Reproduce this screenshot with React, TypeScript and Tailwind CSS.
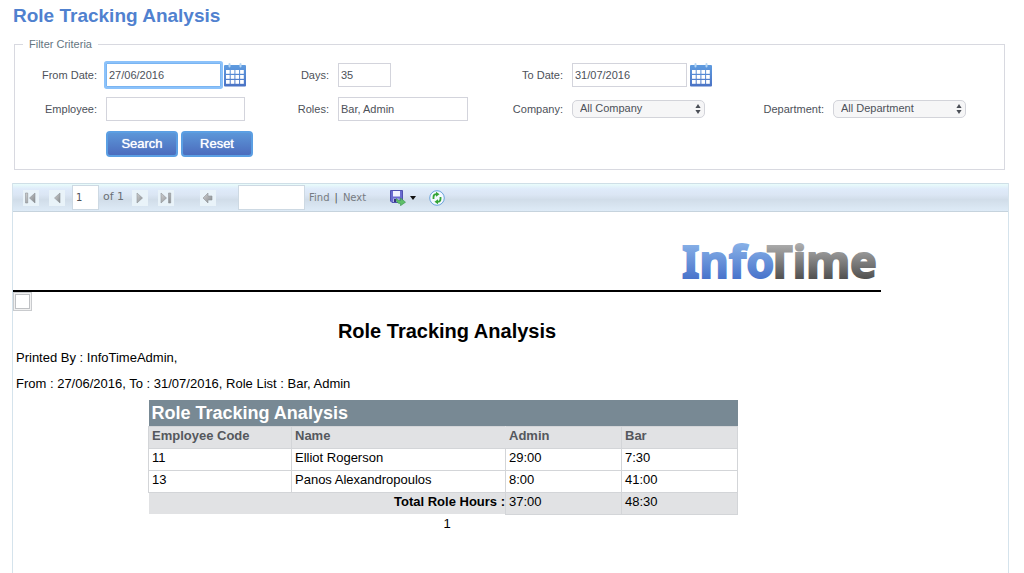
import type { ReactNode } from "react";

const rows = [
  { code: "11", name: "Elliot Rogerson", admin: "29:00", bar: "7:30" },
  { code: "13", name: "Panos Alexandropoulos", admin: "8:00", bar: "41:00" },
];

const inputClass = "h-6 border border-[#d3d4dc] bg-white text-[#4d5159] outline-none";

function CalendarIcon() {
  return (
    <svg width="22" height="24" viewBox="0 0 22 24" aria-hidden="true">
      <defs>
        <linearGradient id="cal" x1="0" y1="0" x2="0" y2="1">
          <stop offset="0" stopColor="#5f9ce0" />
          <stop offset="1" stopColor="#4a72c4" />
        </linearGradient>
      </defs>
      <rect x="0" y="2" width="22" height="21.5" rx="1" fill="url(#cal)" />
      <rect x="4.5" y="0" width="2" height="4.5" rx="1" fill="#b5d5f3" />
      <rect x="15.5" y="0" width="2" height="4.5" rx="1" fill="#b5d5f3" />
      {[7, 12, 17].map((y) =>
        [2, 6.7, 11.4, 16.1].map((x) => (
          <rect key={`${x}-${y}`} x={x} y={y} width="3.7" height="3.8" fill="#fff" />
        ))
      )}
    </svg>
  );
}

function Label({ htmlFor, children }: { htmlFor: string; children: ReactNode }) {
  return (
    <label htmlFor={htmlFor} className="text-right whitespace-nowrap">
      {children}
    </label>
  );
}

function DateField({ id, value, focused }: { id: string; value: string; focused?: boolean }) {
  return (
    <div className="flex items-center gap-[3px]">
      <input
        id={id}
        defaultValue={value}
        className={
          focused
            ? "h-6 w-[115px] border border-[#7ab5f2] bg-white px-[2px] text-[#4d5159] ring-2 ring-[#8cc2fa] rounded-[1px] outline-none"
            : `${inputClass} w-[115px] px-[2px]`
        }
      />
      <button type="button" aria-label="Open calendar" className="shrink-0">
        <CalendarIcon />
      </button>
    </div>
  );
}

function SelectField({ id, option }: { id: string; option: string }) {
  return (
    <div className="relative w-[133px]">
      <select
        id={id}
        className="block h-[18px] w-full appearance-none rounded-[5px] border border-[#d3d4da] bg-[#f6f6f7] pb-[2px] pl-[7px] leading-[14px] text-[#4d5159] outline-none"
      >
        <option>{option}</option>
      </select>
      <svg
        className="pointer-events-none absolute top-1 right-1"
        width="6"
        height="10"
        viewBox="0 0 6 10"
        fill="#4a4e56"
        aria-hidden="true"
      >
        <path d="M3 0 5.6 4H.4zM3 10 .4 6h5.2z" />
      </svg>
    </div>
  );
}

function ToolButton({ label, children }: { label: string; children: ReactNode }) {
  return (
    <button type="button" aria-label={label} className="size-4 shrink-0 bg-[#e9f3f9]">
      <svg width="16" height="16" viewBox="0 0 16 16" fill="url(#metal)" stroke="#8f9499" strokeWidth="0.6">
        {children}
      </svg>
    </button>
  );
}

function Toolbar() {
  return (
    <div className="flex h-[29px] items-center border-y border-t-[#cfdfe7] border-b-[#c6d3dd] bg-[linear-gradient(#e9fcfb,#dfebfa_18%,#dbe6f4_40%,#d1dde9_58%,#deebf7)] pl-[10px] font-['DejaVu_Sans',sans-serif] text-[10px] text-[#767b82]">
      <svg width="0" height="0" className="absolute" aria-hidden="true">
        <defs>
          <linearGradient id="metal" x1="0" y1="0" x2="1" y2="1">
            <stop offset="0" stopColor="#d2d2d2" />
            <stop offset="1" stopColor="#85898d" />
          </linearGradient>
        </defs>
      </svg>
      <div className="flex items-center gap-[10px]">
        <ToolButton label="First page">
          <path d="M2.5 3h2.2v10H2.5zM12 3v10L6.5 8z" />
        </ToolButton>
        <ToolButton label="Previous page">
          <path d="M11 3v10L5.5 8z" />
        </ToolButton>
      </div>
      <input
        aria-label="Current page"
        defaultValue="1"
        className="ml-[7px] h-[25px] w-[27px] border border-[#cdd9e3] bg-white pl-[3px] text-[#4d5159] outline-none"
      />
      <span className="ml-1 w-[29px] text-[11px] text-[#6a6f76]">of 1</span>
      <div className="flex items-center gap-[10px]">
        <ToolButton label="Next page">
          <path d="M5 3v10l5.5-5z" />
        </ToolButton>
        <ToolButton label="Last page">
          <path d="M3 3v10l5.5-5zM10.5 3h2.2v10h-2.2z" />
        </ToolButton>
      </div>
      <div className="ml-[26px] flex">
        <ToolButton label="Back to parent report">
          <path d="M8 3v3h4v4H8v3L3 8z" />
        </ToolButton>
      </div>
      <input
        aria-label="Find text"
        className="ml-[22px] h-[25px] w-[67px] border border-[#cdd9e3] bg-white px-1 outline-none"
      />
      <a href="#find" className="ml-1">Find</a>
      <span className="mx-[5px] text-[#555]">|</span>
      <a href="#next">Next</a>
      <button type="button" aria-label="Export" className="ml-6 flex items-center gap-1">
        <svg width="16" height="16" viewBox="0 0 16 16" aria-hidden="true">
          <path d="M.5.5h12v12H2L.5 11z" fill="#6a6cd0" stroke="#4f51b0" />
          <path d="M3 1h7v5.5H3z" fill="#f1f3ff" />
          <path d="M3 8.5h6.5V12H3z" fill="#b6b9e8" />
          <path d="M4 9h2v3H4z" fill="#34367e" />
          <path
            d="M6.5 8.5c1 1.600 2.200 2 4 2V8l5 4.200-5 3.500v-2.200c-3 0-4.500-1.600-4-5z"
            fill="#5fbf69"
            stroke="#35924a"
            strokeWidth="0.6"
          />
        </svg>
        <svg width="6" height="4" viewBox="0 0 6 4" aria-hidden="true">
          <path d="M0 0h6L3 4z" fill="#111" />
        </svg>
      </button>
      <button type="button" aria-label="Refresh" className="ml-[13px]">
        <svg width="16" height="16" viewBox="0 0 16 16" aria-hidden="true">
          <circle cx="8" cy="8" r="7.3" fill="#f3f9ff" stroke="#6ba3dc" />
          <path d="M4.5 9V7c0-1.800 1-2.800 3-2.800" fill="none" stroke="#35a536" strokeWidth="1.8" />
          <path d="M7 1.8 10.5 4.300 7 6.800z" fill="#35a536" />
          <path d="M11.5 7v2c0 1.800-1 2.800-3 2.800" fill="none" stroke="#35a536" strokeWidth="1.8" />
          <path d="M9 9.200 5.500 11.700 9 14.200z" fill="#35a536" />
        </svg>
      </button>
    </div>
  );
}

function FilterCriteria() {
  return (
    <fieldset className="mt-2 mr-[19px] ml-[14px] border border-[#d8d9e0] pb-3">
      <legend className="ml-2 px-[6px] leading-4 text-[#64757f]">Filter Criteria</legend>
      <div className="grid grid-cols-[82px_154fr_60px_146fr_70px_163fr_80px_171fr] items-center gap-x-[9px] gap-y-[10px] pt-[11px]">
        <Label htmlFor="from">From Date:</Label>
        <DateField id="from" value="27/06/2016" focused />
        <Label htmlFor="days">Days:</Label>
        <input id="days" defaultValue="35" className={`${inputClass} w-[53px] px-[2px]`} />
        <Label htmlFor="to">To Date:</Label>
        <DateField id="to" value="31/07/2016" />
        <div className="col-span-2" />

        <Label htmlFor="employee">Employee:</Label>
        <input id="employee" className={`${inputClass} w-[139px] px-[2px]`} />
        <Label htmlFor="roles">Roles:</Label>
        <input id="roles" defaultValue="Bar, Admin" className={`${inputClass} w-[130px] px-[2px]`} />
        <Label htmlFor="company">Company:</Label>
        <SelectField id="company" option="All Company" />
        <Label htmlFor="department">Department:</Label>
        <SelectField id="department" option="All Department" />

        <div className="col-start-2 flex gap-[3px] text-[13px] text-white">
          {["Search", "Reset"].map((text) => (
            <button
              key={text}
              type="button"
              className="h-[26px] w-[72px] shrink-0 rounded-[4px] border-2 border-[#5b9fe3] bg-linear-to-b from-[#5c96d8] to-[#4c6cbd] leading-5 text-shadow-[0_0_1px_#fff]"
            >
              {text}
            </button>
          ))}
        </div>
      </div>
    </fieldset>
  );
}

function Logo() {
  return (
    <svg
      width="200"
      height="72"
      viewBox="0 0 200 72"
      className="overflow-visible font-['Noto_Sans',sans-serif] text-[45px] font-bold"
      strokeWidth="1.8"
      role="img"
      aria-label="InfoTime"
    >
      <defs>
        <linearGradient id="blue" gradientUnits="userSpaceOnUse" x1="0" y1="24" x2="0" y2="61">
          <stop offset="0" stopColor="#8ab3e8" />
          <stop offset="1" stopColor="#4873cb" />
        </linearGradient>
        <linearGradient id="grey" gradientUnits="userSpaceOnUse" x1="0" y1="24" x2="0" y2="61">
          <stop offset="0" stopColor="#b2b2b2" />
          <stop offset="1" stopColor="#505050" />
        </linearGradient>
      </defs>
      <text x="196" y="60" textAnchor="end" fill="url(#grey)" stroke="url(#grey)">Time</text>
      <text x="1" y="60" fill="url(#blue)" stroke="url(#blue)">Info</text>
    </svg>
  );
}

function Report() {
  const cell = "border border-[#d3d5d8] px-[3px] pb-1 leading-[17px]";
  return (
    <div className="w-full max-w-[868px] text-[13px] text-black">
      <div className="flex h-[80px] items-end justify-end border-b-2 border-black">
        <Logo />
      </div>
      <div className="size-[19px] border border-[#c9cbce] bg-[#f1f1f1] p-px">
        <div className="size-full border border-[#bfc1c4] bg-white" />
      </div>
      <h2 className="mt-2 text-center text-[20px] leading-6 font-bold">Role Tracking Analysis</h2>
      <div className="px-[3px] pt-[2px] leading-[26px]">
        <p>Printed By : InfoTimeAdmin,</p>
        <p>From : 27/06/2016, To : 31/07/2016, Role List : Bar, Admin</p>
      </div>
      <table className="mt-[3px] ml-[135px] w-[590px] table-fixed border-collapse text-left">
        <colgroup>
          <col className="w-[143px]" />
          <col className="w-[214px]" />
          <col className="w-[116px]" />
          <col />
        </colgroup>
        <thead>
          <tr>
            <th colSpan={4} className="h-[26px] bg-[#788994] px-[3px] text-[18px] leading-6 font-bold text-white">
              Role Tracking Analysis
            </th>
          </tr>
          <tr className="bg-[#e1e2e4] text-[#55585d]">
            <th className={cell}>Employee Code</th>
            <th className={`${cell} border-r-[#e1e2e4]`}>Name</th>
            <th className={cell}>Admin</th>
            <th className={cell}>Bar</th>
          </tr>
        </thead>
        <tbody>
          {rows.map((row) => (
            <tr key={row.code}>
              <td className={cell}>{row.code}</td>
              <td className={cell}>{row.name}</td>
              <td className={cell}>{row.admin}</td>
              <td className={cell}>{row.bar}</td>
            </tr>
          ))}
        </tbody>
        <tfoot>
          <tr className="bg-[#e1e2e4]">
            <th colSpan={2} className="pb-1 text-right leading-[17px]">Total Role Hours :</th>
            <td className={cell}>37:00</td>
            <td className={cell}>48:30</td>
          </tr>
        </tfoot>
      </table>
      <p className="text-center leading-[18px]">1</p>
    </div>
  );
}

export default function App() {
  return (
    <div className="flex min-h-screen flex-col bg-white pt-[3px] font-['Liberation_Sans',Arial,sans-serif] text-[11px] text-[#4d5159]">
      <h1 className="ml-[13px] text-[19px] leading-[25px] font-bold text-[#5081cf]">Role Tracking Analysis</h1>
      <FilterCriteria />
      <main className="mt-[13px] mr-[15px] ml-3 flex-1 border-x border-[#d5e3ec]">
        <Toolbar />
        <Report />
      </main>
    </div>
  );
}
